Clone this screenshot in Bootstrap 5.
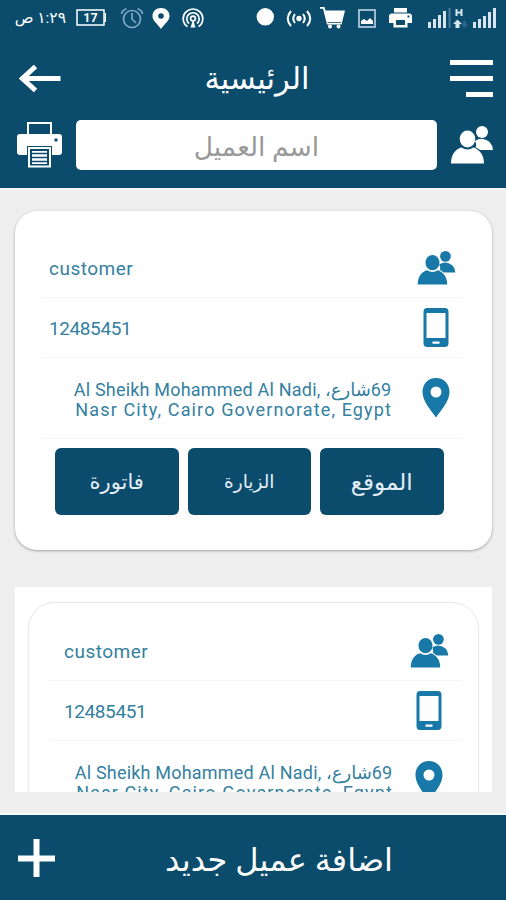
<!DOCTYPE html>
<html lang="ar">
<head>
<meta charset="utf-8">
<meta name="viewport" content="width=device-width, initial-scale=1">
<title>الرئيسية</title>
<link href="https://cdn.jsdelivr.net/npm/bootstrap@5.3.0/dist/css/bootstrap.min.css" rel="stylesheet">
<style>
:root{--navy:#0b4c6c;--blue:#1878a8;--ink:#34809f}
body{background:#eee;font-family:Roboto,"DejaVu Sans",sans-serif;height:900px;overflow:hidden}
svg{display:block;flex:none}
.navy{background:var(--navy);color:#fff}
.blue-icon{color:var(--blue)}
.top-area{height:190px;border-bottom:2px solid #f3f5fb}
.status-bar{height:36px;padding:0 9px 0 12px}
.status-time{font-size:15.5px;line-height:20px;width:54px;white-space:nowrap}
.gap-clock{margin-left:14px}
.gap-s{margin-left:8px}
.gap-m{margin-left:12px}
.gap-l{margin-left:15px}
.title-row{height:84px;padding:0 13px 0 19px}
.title-text{font-size:30.5px;line-height:40px;padding:2px 0 0 3px}
.search-row{height:50px;padding:0 13px 0 17px}
.search-box{width:361px;height:50px;border:0;border-radius:5px;font-size:26.5px;text-align:center;color:#777;padding:2px 0 0}
.search-box::placeholder{color:#999;opacity:1}
.list-area{height:602px;padding:21px 14px 0 15px;overflow:hidden}
.client{background:#fff;border-radius:22px;height:339px;padding:27px 30px 0 27px;box-shadow:0 1px 3px rgba(0,0,0,.32)}
.client-wrap{background:#fff;margin-top:37px;height:205px;padding:15px 13px 0 13px;overflow:hidden}
.client-wrap .client{border:1px solid #e9e9e9;box-shadow:0 0 2px rgba(0,0,0,.06);border-radius:27px;padding:18px 16px 0 20px}
.info{color:var(--ink);border-bottom:1px solid #f5f5f5;height:60px;font-size:19px}
.info .caption{letter-spacing:.5px;padding:3px 0 0 7px}
.info .digits{letter-spacing:-.4px}
.info .icon-cell{width:52px}
.info.address{height:81px;line-height:20px}
.client-wrap .info .caption{padding-left:15px}
.client-wrap .icon-cell{width:66px}
.addr{width:318px;text-align:right;white-space:nowrap;margin-right:19px;padding-top:3px;font-size:18px}
.client-wrap .addr{margin-right:4px}
.addr-first{letter-spacing:.2px}
.addr-second{letter-spacing:1.13px;margin-right:-1px}
.action{background:var(--navy);color:#e4edf8;width:123.5px;height:67px;border-radius:6px;font-size:21px;border:0;padding:3px 0 0}
.action:hover{background:#083f5b;color:#fff}
.action-visit{font-size:18.5px}
.action-place{font-size:23px}
.actions{gap:9px;padding:9px 0 0 13px}
.foot{height:85px;padding:0 20px 0 18px}
.foot-gap{height:23px;border-bottom:2px solid #fafafa}
.foot-text{font-size:32px;line-height:40px;padding:4px 0 0 17px}
</style>
<script src="https://cdn.jsdelivr.net/npm/bootstrap@5.3.0/dist/js/bootstrap.bundle.min.js"></script>
</head>
<body>
<svg width="0" height="0" class="position-absolute">
<symbol id="people" viewBox="0 0 42 38"><g fill="currentColor"><circle cx="31" cy="6" r="6"/><path d="M24.500 23Q26 18 24 15Q27 12.800 31 12.800Q41 14 42 24H29Q27 22.500 24.500 21Z"/><ellipse cx="16.500" cy="13" rx="7.800" ry="8.500"/><path d="M0 37.500C0 27 6 22.500 10.500 21.500Q16.500 25.500 22.500 21.500C28 23.500 33 28 33 37.500Z"/></g></symbol>
<symbol id="phone" viewBox="0 0 26 39"><path fill="currentColor" fill-rule="evenodd" d="M4 0H22Q25.500 0 25.500 4V35Q25.500 39 22 39H4Q.5 39 .5 35V4Q.5 0 4 0ZM3.500 5V30H22.500V5ZM9.500 33.500V35.800H16.500V33.500Z"/></symbol>
<symbol id="pin" viewBox="0 0 28 40"><path fill="currentColor" fill-rule="evenodd" d="M14 0C6 0 .5 6 .5 14C.5 23 8 31 14 39.500C20 31 27.500 23 27.500 14C27.500 6 22 0 14 0ZM14 8.500A5.500 5.500 0 1 1 14 19.500A5.500 5.500 0 0 1 14 8.500Z"/></symbol>
</svg>

<header class="navy top-area">
  <div class="status-bar d-flex align-items-center justify-content-between">
    <div class="d-flex align-items-center">
      <div class="status-time" dir="rtl">١:٢٩ ص</div>
      <svg class="gap-s" width="32" height="20" viewBox="0 0 32 20"><rect x="3" y="2" width="27" height="15" fill="none" stroke="#fff" stroke-width="1.500"/><path d="M31.300 5v9" stroke="#fff" stroke-width="1.400"/><text x="16.500" y="14.200" text-anchor="middle" font-family="Roboto,sans-serif" font-size="12.500" font-weight="700" fill="#fff">17</text></svg>
      <svg class="gap-clock" width="24" height="22" viewBox="0 0 24 22" fill="none" stroke="#7fa9c4" stroke-width="1.700"><circle cx="12" cy="12" r="8.500"/><path d="M12 6v6l4 4M1.500 7Q2 3 6.500 1.800M22.500 7Q22 3 17.500 1.800"/></svg>
      <svg class="gap-s" width="18" height="21" viewBox="0 0 18 21"><path fill="#fff" fill-rule="evenodd" d="M9 0C4 0 .5 3.500 .5 8C.5 13 5 15 9 21C13 15 17.500 13 17.500 8C17.500 3.500 14 0 9 0ZM9 5.200A2.800 2.800 0 1 1 9 10.800A2.800 2.800 0 0 1 9 5.200Z"/></svg>
      <svg class="gap-m" width="22" height="21" viewBox="0 0 22 21" fill="none" stroke="#fff" stroke-width="1.700"><path d="M5.500 18.500Q1.200 16 1.200 10.500A9.800 9.500 0 0 1 20.800 10.500Q20.800 16 16.500 18.500M7 15.700A6.200 6.200 0 1 1 15 15.700"/><circle cx="11" cy="10.500" r="2.400"/><path d="M11 11.500L8.500 19.500H13.500Z" fill="#fff" stroke="none"/></svg>
    </div>
    <div class="d-flex align-items-center">
      <svg width="18" height="20" viewBox="0 0 18 20"><circle cx="9.300" cy="8.800" r="8.700" fill="#fff"/></svg>
      <svg class="gap-m" width="26" height="20" viewBox="0 0 26 20" fill="none" stroke="#fff" stroke-width="2"><circle cx="13" cy="10.500" r="2.700" fill="#fff" stroke="none"/><path d="M9 6Q5.500 10.500 9 15M17 6Q20.500 10.500 17 15M5 3Q-1.500 10.500 5 18M21 3Q27.500 10.500 21 18"/></svg>
      <svg class="gap-s" width="26" height="22" viewBox="0 0 26 22" fill="#fff"><path d="M0 0H4.500L5.500 3.500H25L21.500 17.500H7L3 1.800H0Z"/><circle cx="10" cy="19.500" r="2"/><circle cx="18.500" cy="19.500" r="2"/><path stroke="#0b4c6c" stroke-width=".8" d="M7.500 15.500H21"/></svg>
      <svg class="gap-m" width="18" height="19" viewBox="0 0 18 19"><rect x="1" y="1" width="16" height="17" fill="none" stroke="#b7cede" stroke-width="1.700"/><path d="M3 15V12L6 10L9 12L12 9L15 12V15Z" fill="#fff"/></svg>
      <svg class="gap-m" width="24" height="20" viewBox="-1 0 24 20" fill="#fff"><path d="M5 0H18V4.500H5Z"/><path fill-rule="evenodd" d="M3 5.500H20Q23 5.500 23 8.500V15H18.500V19.500H4.500V15H0V8.500Q0 5.500 3 5.500ZM7 12V17H16V12ZM18.500 7.500V9.500H20.500V7.500Z"/></svg>
      <svg class="gap-l" width="70" height="22" viewBox="0 0 70 22" fill="#d9e5ee"><path d="M1 15h3v6H1zM6 12h3v9H6zM11 8h3v13h-3zM16 4h3v17h-3zM46 15h3v6h-3zM51 12h3v9h-3zM56 9h3v12h-3zM61 5h3v16h-3zM66 1h3v20h-3z"/><path d="M21.500 1h2v20h-2z" fill="#487c9c"/><path d="M28.500 2h2v2.500h3V2h2v7h-2V6.500h-3V9h-2zM30.500 12.500l4.500 4.500h-2.500v4h-4v-4h-2.500z"/><path d="M36 14h3v3h2l-3.500 4-3.500-4h2z" fill="#2a6585"/></svg>
    </div>
  </div>

  <nav class="title-row d-flex align-items-center justify-content-between">
    <svg width="42" height="30" viewBox="0 0 42 30" fill="none" stroke="#fff" stroke-width="5"><path d="M41.500 15.500H4M16.500 3.500L3.500 15.500L16.500 27.500"/></svg>
    <div class="title-text" dir="rtl">الرئيسية</div>
    <svg width="43" height="38" viewBox="0 0 43 38" fill="#fff"><path d="M0 1H43V6H0ZM0 17H43V22H0ZM16 33H43V38H16Z"/></svg>
  </nav>

  <div class="search-row d-flex align-items-center justify-content-between">
    <svg width="45" height="46" viewBox="0 0 45 46"><rect x="11" y="1" width="23" height="14" fill="none" stroke="#fff" stroke-width="2"/><path fill="#fff" d="M3 12H42Q45 12 45 15V30Q45 33 42 33H3Q0 33 0 30V15Q0 12 3 12Z"/><circle cx="39" cy="18" r="1.700" fill="#0b4c6c"/><path fill="#0b4c6c" d="M10 24H35V33H10Z"/><rect x="12" y="26" width="21" height="18.500" fill="#0b4c6c" stroke="#fff" stroke-width="2"/><path fill="#fff" d="M15 29H30V42H15Z"/><path stroke="#0b4c6c" stroke-width="1.700" d="M15 31.500H30M15 35.500H30M15 39.500H30"/></svg>
    <input class="form-control search-box" dir="rtl" placeholder="اسم العميل">
    <svg width="42" height="38"><use href="#people"/></svg>
  </div>
</header>

<main class="list-area">
  <article class="client">
    <div class="info d-flex align-items-center justify-content-between"><span class="caption">customer</span><span class="icon-cell d-flex justify-content-center"><svg class="blue-icon" width="39" height="34"><use href="#people"/></svg></span></div>
    <div class="info d-flex align-items-center justify-content-between"><span class="caption digits">12485451</span><span class="icon-cell d-flex justify-content-center"><svg class="blue-icon" width="26" height="39"><use href="#phone"/></svg></span></div>
    <div class="info address d-flex align-items-center justify-content-end"><div class="addr"><div class="addr-first" dir="rtl">69شارع، <bdi dir="ltr">Al Sheikh Mohammed Al Nadi,</bdi></div><div class="addr-second">Nasr City, Cairo Governorate, Egypt</div></div><span class="icon-cell d-flex justify-content-center"><svg class="blue-icon" width="28" height="40"><use href="#pin"/></svg></span></div>
    <div class="actions d-flex">
      <button class="btn action">فاتورة</button><button class="btn action action-visit">الزيارة</button><button class="btn action action-place">الموقع</button>
    </div>
  </article>

  <div class="client-wrap">
    <article class="client">
      <div class="info d-flex align-items-center justify-content-between"><span class="caption">customer</span><span class="icon-cell d-flex justify-content-center"><svg class="blue-icon" width="39" height="34"><use href="#people"/></svg></span></div>
      <div class="info d-flex align-items-center justify-content-between"><span class="caption digits">12485451</span><span class="icon-cell d-flex justify-content-center"><svg class="blue-icon" width="26" height="39"><use href="#phone"/></svg></span></div>
      <div class="info address d-flex align-items-center justify-content-end"><div class="addr"><div class="addr-first" dir="rtl">69شارع، <bdi dir="ltr">Al Sheikh Mohammed Al Nadi,</bdi></div><div class="addr-second">Nasr City, Cairo Governorate, Egypt</div></div><span class="icon-cell d-flex justify-content-center"><svg class="blue-icon" width="28" height="40"><use href="#pin"/></svg></span></div>
    </article>
  </div>
</main>
<div class="foot-gap"></div>
<footer class="navy foot d-flex align-items-center">
  <svg width="37" height="38" viewBox="0 0 37 38"><path stroke="#fff" stroke-width="6" d="M18.500 0V38M0 19.500H37"/></svg>
  <div class="foot-text flex-grow-1 text-center" dir="rtl">اضافة عميل جديد</div>
</footer>
</body>
</html>
